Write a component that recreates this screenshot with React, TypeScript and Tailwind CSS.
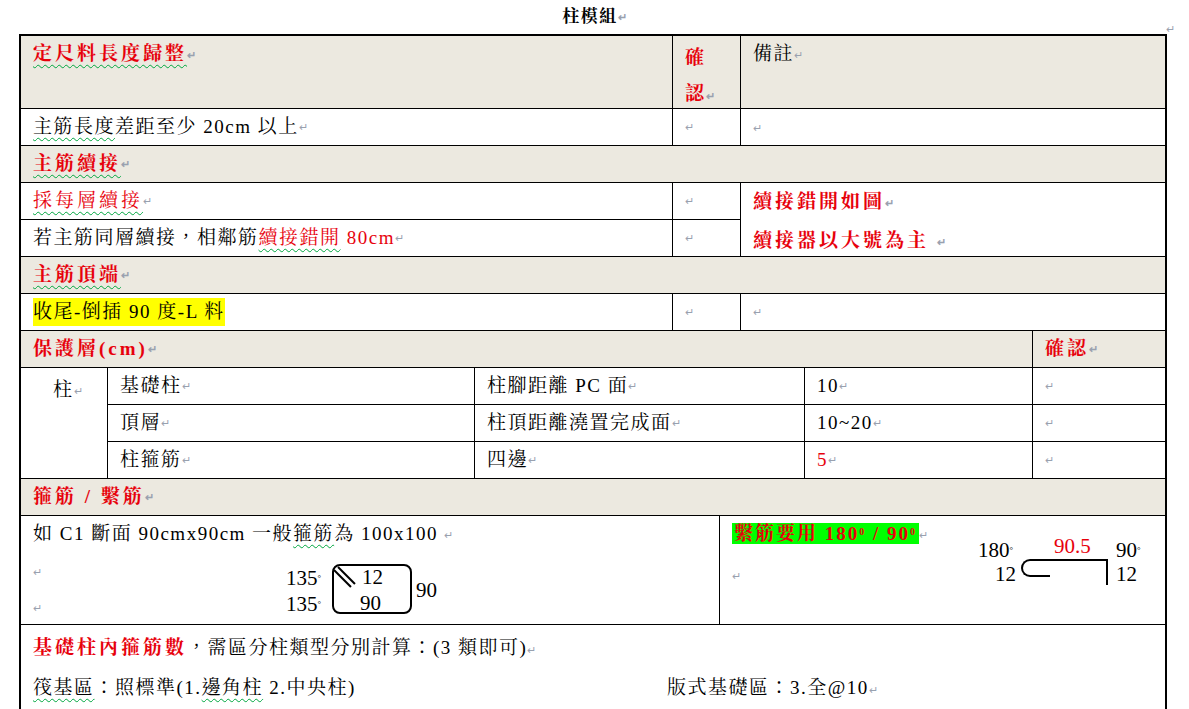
const F = { fontFamily: '"Liberation Serif", "Noto Serif CJK TC", "Noto Sans CJK TC", serif' };

function P() {
  return <span className="text-[11px] text-gray-400 align-middle tracking-normal">↵</span>;
}
function W({ children }: { children: React.ReactNode }) {
  return <span className="underline decoration-wavy decoration-green-600 decoration-1 underline-offset-4">{children}</span>;
}

const bg = "bg-[#ece9e0]";

export default function App() {
  return (
    <div className="w-[1189px] h-[709px] bg-white overflow-hidden relative text-[19px] tracking-[1.5px] text-black" style={F}>
      <div className="h-[34px] flex items-center justify-center font-bold text-[17px]">柱模組<P /></div>
      <div className="absolute right-[14px] top-[14px]"><P /></div>
      <div className="ml-[19px] w-[1148px] border-t-2 border-l-2 border-r-2 border-black">
        <div className={`flex h-[73px] border-b border-black ${bg}`}>
          <div className="w-[652px] border-r border-black px-3 pt-1 text-red-600 font-bold tracking-[3px]"><W>定尺料長度歸整</W><P /></div>
          <div className="w-[68px] border-r border-black px-3 pt-1 text-red-600 font-bold leading-[36px]">確<br />認<P /></div>
          <div className="flex-1 px-3 pt-1">備註<P /></div>
        </div>
        <div className="flex h-[37px] border-b border-black items-center">
          <div className="w-[652px] h-full border-r border-black px-3 flex items-center"><W>主筋長度</W>差距至少 20cm 以上<P /></div>
          <div className="w-[68px] h-full border-r border-black px-3 flex items-center"><P /></div>
          <div className="flex-1 px-3"><P /></div>
        </div>
        <div className={`h-[37px] border-b border-black px-3 flex items-center text-red-600 font-bold tracking-[3px] ${bg}`}><W>主筋續接</W><P /></div>
        <div className="flex h-[74px] border-b border-black">
          <div className="w-[652px] border-r border-black">
            <div className="h-[37px] border-b border-black px-3 flex items-center text-red-600 tracking-[3px]"><W>採每層續接</W><P /></div>
            <div className="h-[36px] px-3 flex items-center">若主筋同層續接，相鄰筋<span className="text-red-600"><W>續接錯開</W> 80cm</span><P /></div>
          </div>
          <div className="w-[68px] border-r border-black">
            <div className="h-[37px] border-b border-black px-3 flex items-center"><P /></div>
            <div className="h-[36px] px-3 flex items-center"><P /></div>
          </div>
          <div className="flex-1 px-3 text-red-600 font-bold tracking-[3px] leading-[37px]">續接錯開如圖<P /><br />續接器以大號為主 <P /></div>
        </div>
        <div className={`h-[37px] border-b border-black px-3 flex items-center text-red-600 font-bold tracking-[3px] ${bg}`}><W>主筋頂端</W><P /></div>
        <div className="flex h-[37px] border-b border-black">
          <div className="w-[652px] border-r border-black px-3 flex items-center"><span className="bg-[#ffff00]">收尾-倒插 90 度-L 料</span></div>
          <div className="w-[68px] border-r border-black px-3 flex items-center"><P /></div>
          <div className="flex-1 px-3 flex items-center"><P /></div>
        </div>
        <div className={`flex h-[37px] border-b border-black ${bg}`}>
          <div className="w-[1012px] border-r border-black px-3 flex items-center text-red-600 font-bold tracking-[3px]">保護層(cm)<P /></div>
          <div className="flex-1 px-3 flex items-center text-red-600 font-bold tracking-[3px]">確認<P /></div>
        </div>
        <div className="flex h-[111px] border-b border-black">
          <div className="w-[87px] border-r border-black pl-8 pt-2">柱<P /></div>
          <div className="flex-1">
            {[
              ["基礎柱 ", "柱腳距離 PC 面", "10", false],
              ["頂層", "柱頂距離澆置完成面", "10~20", false],
              ["柱箍筋", "四邊", "5", true],
            ].map(([a, b, c, red], i) => (
              <div key={i} className={`flex h-[37px] ${i < 2 ? "border-b border-black" : ""}`}>
                <div className="w-[367px] border-r border-black px-3 flex items-center">{a}<P /></div>
                <div className="w-[330px] border-r border-black px-3 flex items-center">{b}<P /></div>
                <div className={`w-[228px] border-r border-black px-3 flex items-center ${red ? "text-red-600" : ""}`}>{c}<P /></div>
                <div className="flex-1 px-3 flex items-center"><P /></div>
              </div>
            ))}
          </div>
        </div>
        <div className={`h-[37px] border-b border-black px-3 flex items-center text-red-600 font-bold tracking-[3px] ${bg}`}>箍筋 / 繫筋<P /></div>
        <div className="flex h-[109px] border-b border-black">
          <div className="w-[699px] border-r border-black px-3 pt-1 relative">
            <div>如 C1 斷面 90cmx90cm 一般<W>箍筋</W>為 100x100 <P /></div>
            <div className="mt-2"><P /></div>
            <div className="mt-2"><P /></div>
            <div className="absolute left-[265px] top-[48px] w-[180px] h-[52px] text-[21px] leading-[24px] tracking-normal">
              <div className="absolute left-0 top-[2px]">135<sup className="text-[9px]">°</sup></div>
              <div className="absolute left-0 top-[28px]">135<sup className="text-[9px]">°</sup></div>
              <div className="absolute left-[46px] top-[0px] w-[80px] h-[50px] border-2 border-black rounded-[8px]" />
              <div className="absolute left-[48px] top-[5px] w-[24px] h-[2px] bg-black rotate-45 origin-left" />
              <div className="absolute left-[52px] top-[2px] w-[24px] h-[2px] bg-black rotate-45 origin-left" />
              <div className="absolute left-[76px] top-[1px]">12</div>
              <div className="absolute left-[74px] top-[27px]">90</div>
              <div className="absolute left-[130px] top-[14px]">90</div>
            </div>
          </div>
          <div className="flex-1 px-3 pt-1 relative">
            <span className="bg-[#00ff00] text-red-600 font-bold tracking-[2px] px-0.5">繫筋要用 180<sup className="text-[10px]">0</sup> / 90<sup className="text-[10px]">0</sup></span><P />
            <div className="mt-3"><P /></div>
            <div className="absolute left-[258px] top-[22px] w-[180px] h-[50px] text-[21px] leading-[24px] tracking-normal">
              <div className="absolute left-0 top-0">180<sup className="text-[9px]">°</sup></div>
              <div className="absolute left-[17px] top-[24px]">12</div>
              <div className="absolute left-[76px] top-[-4px] text-red-600">90.5</div>
              <div className="absolute left-[138px] top-0">90<sup className="text-[9px]">°</sup></div>
              <div className="absolute left-[138px] top-[24px]">12</div>
              <div className="absolute left-[43px] top-[21px] w-[10px] h-[18px] border-2 border-r-0 border-black rounded-l-full" />
              <div className="absolute left-[52px] top-[21px] w-[78px] h-[2px] bg-black" />
              <div className="absolute left-[52px] top-[37px] w-[20px] h-[2px] bg-black" />
              <div className="absolute left-[128px] top-[21px] w-[2px] h-[26px] bg-black" />
            </div>
          </div>
        </div>
        <div className="h-[90px] px-3 pt-1 leading-[38px]">
          <div><span className="text-red-600 font-bold tracking-[3px]">基礎柱內箍筋數</span>，需區分柱類型分別計算：(3 類即可)<P /></div>
          <div className="flex"><span className="w-[634px]"><W>筏基區</W>：照標準(1.<W>邊角柱</W> 2.中央柱)</span><span>版式基礎區：3.全@10<P /></span></div>
        </div>
      </div>
    </div>
  );
}
